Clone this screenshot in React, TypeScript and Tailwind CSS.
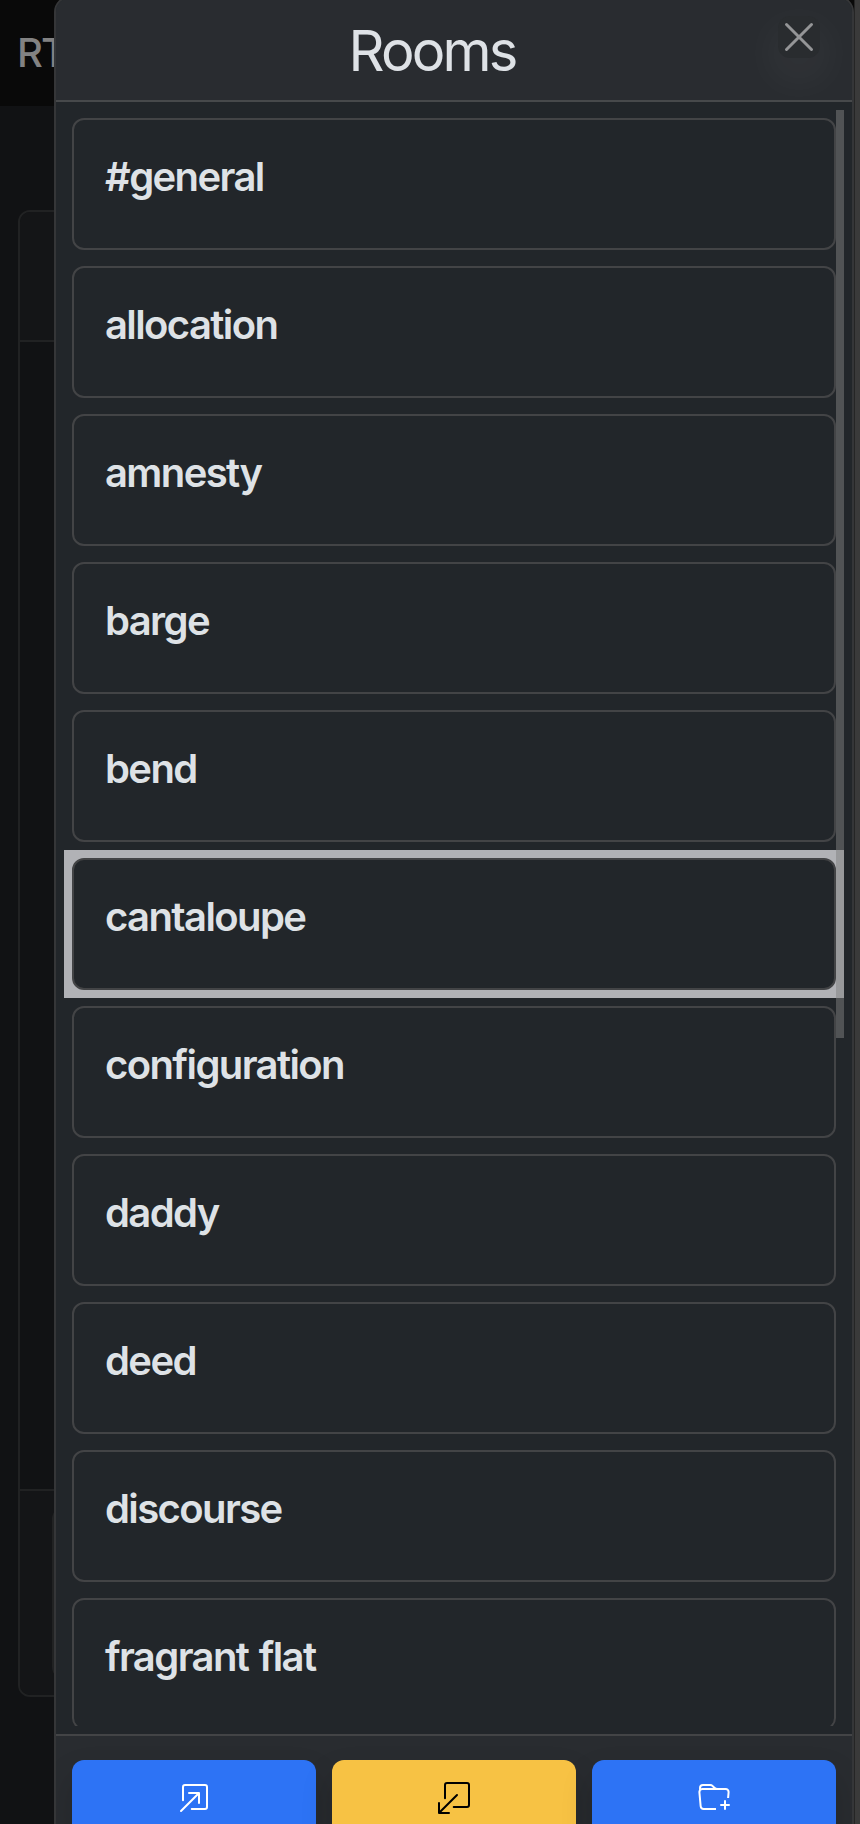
import React from "react";
import { BsBoxArrowInUpRight, BsBoxArrowDownLeft, BsFolderPlus } from "react-icons/bs";

const rooms = [
  "#general",
  "allocation",
  "amnesty",
  "barge",
  "bend",
  "cantaloupe",
  "configuration",
  "daddy",
  "deed",
  "discourse",
  "fragrant flat",
];

function Backdrop() {
  return (
    <div className="absolute inset-0 flex flex-col bg-[#111214]">
      <div className="flex h-[106px] items-center bg-[#090909] pl-[17px] text-[40px] font-medium tracking-[-2px] text-[#828282]">
        RTC
      </div>
      <div className="ml-[18px] mt-[104px] flex h-[1487px] w-[900px] flex-col rounded-[12px] border-2 border-[#212223]">
        <div className="h-[130px] rounded-t-[10px] border-b-2 border-[#212223] bg-[#141517]" />
        <div className="flex-1" />
        <div className="h-[206px] rounded-b-[10px] border-t-2 border-[#212223] bg-[#141517] pl-[32px] pt-[16px]">
          <div className="h-[172px] w-[400px] rounded-[12px] border-2 border-[#212223]" />
        </div>
      </div>
    </div>
  );
}

function RoomCard({ name, selected }: { name: string; selected: boolean }) {
  return (
    <li className={selected ? "-m-2 bg-[#b1b2b6] p-2" : ""}>
      <div className="h-[132px] rounded-[12px] border-2 border-[#434446] bg-[#22262a] pl-[31px] pt-[33px] text-[40px] font-semibold leading-[48px] tracking-[-1.6px] text-[#dee2e6] [word-spacing:2px]">
        {name}
      </div>
    </li>
  );
}

export default function App() {
  return (
    <div
      className="relative h-[1824px] w-[860px] overflow-hidden"
      style={{ fontFamily: 'Inter, "Liberation Sans", sans-serif' }}
    >
      <Backdrop />
      <div className="absolute inset-y-0 right-0 w-[6px] border-l border-[#252525] bg-[#3a3a3a]" />
      <section className="absolute left-[54px] top-[-4px] flex h-[1900px] w-[800px] flex-col overflow-hidden rounded-[16px] border-2 border-[#353638] bg-[#22262a] text-[#dee2e6]">
        <header className="relative flex h-[104px] shrink-0 items-center justify-center overflow-hidden border-b-2 border-[#47494b] bg-[#292c30] pr-[44px]">
          <h1 className="mt-[3px] text-[56px] leading-[64px] tracking-[-2.8px]">Rooms</h1>
          <button className="absolute right-[32px] top-[18px] flex h-[42px] w-[42px] items-center justify-center rounded-[12px] bg-[#292c2f] shadow-[0_16px_48px_rgba(255,255,255,0.08)]">
            <svg width="30" height="30" viewBox="0 0 30 30" fill="none" stroke="#949597" strokeWidth="3" strokeLinecap="round">
              <path d="M2.5 2.5 27.5 27.5M27.5 2.5 2.5 27.5" />
            </svg>
          </button>
        </header>
        <div className="h-[1632px] shrink-0 p-2">
          <div className="relative h-full overflow-hidden p-2">
            <ul className="flex flex-col gap-4">
              {rooms.map((r) => (
                <RoomCard key={r} name={r} selected={r === "cantaloupe"} />
              ))}
            </ul>
            <div className="absolute right-0 top-0 h-[928px] w-2 bg-[#808080]/50" />
          </div>
        </div>
        <footer className="grid shrink-0 grid-cols-3 gap-4 border-t-2 border-[#434446] bg-[#292c30] px-4 pt-6">
          <button className="flex h-[76px] justify-center rounded-[12px] bg-[#2d73f5] pt-[22px] text-white shadow-[0_16px_32px_rgba(0,0,0,0.15)]">
            <BsBoxArrowInUpRight size={32} />
          </button>
          <button className="flex h-[76px] justify-center rounded-[12px] bg-[#f7c244] pt-[22px] text-black shadow-[0_16px_32px_rgba(0,0,0,0.15)]">
            <BsBoxArrowDownLeft size={32} />
          </button>
          <button className="flex h-[76px] justify-center rounded-[12px] bg-[#2d73f5] pt-[22px] text-white shadow-[0_16px_32px_rgba(0,0,0,0.15)]">
            <BsFolderPlus size={32} />
          </button>
        </footer>
      </section>
    </div>
  );
}
